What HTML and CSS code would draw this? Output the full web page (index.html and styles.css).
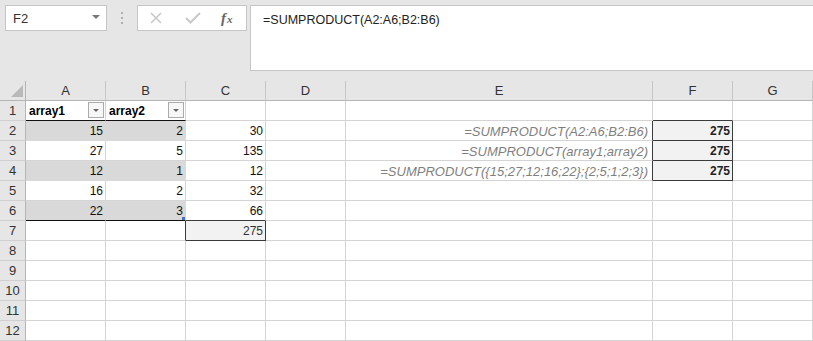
FILE: index.html
```html
<!DOCTYPE html>
<html>
<head>
<meta charset="utf-8">
<title>SUMPRODUCT</title>
<link rel="stylesheet" href="styles.css">
</head>
<body>
<!--formula bar-->
<div id="bar">
  <div class="namebox"><span>F2</span><b class="arrow"></b></div>
  <div class="dots"><i></i><i></i><i></i></div>
  <div class="fxbox">
    <svg class="ico-x" width="12" height="12" viewBox="0 0 12 12"><path d="M1 1L11 11M11 1L1 11" stroke="#c8c8c8" stroke-width="1.6" fill="none"/></svg>
    <svg class="ico-ok" width="16" height="12" viewBox="0 0 16 12"><path d="M1 6L5.5 10.5L15 1" stroke="#c8c8c8" stroke-width="2" fill="none"/></svg>
    <span class="fx">f<sub>x</sub></span>
  </div>
  <div class="formula">=SUMPRODUCT(A2:A6;B2:B6)</div>
</div>

<!--sheet-->
<div id="sheet">
  <div class="row head">
    <div class="corner"><b></b></div>
    <div class="ch">A</div><div class="ch">B</div><div class="ch">C</div><div class="ch">D</div>
    <div class="ch">E</div><div class="ch">F</div><div class="ch">G</div>
  </div>
  <div class="row">
    <div class="rh">1</div>
    <div class="c th bk"><span>array1</span><b class="dd"></b></div>
    <div class="c th bk"><span>array2</span><b class="dd"></b></div>
    <div class="c"></div><div class="c"></div><div class="c"></div>
    <div class="c bb"></div><div class="c"></div>
  </div>
  <div class="row">
    <div class="rh">2</div>
    <div class="c n band">15</div><div class="c n band">2</div>
    <div class="c n">30</div><div class="c"></div>
    <div class="c n it rb">=SUMPRODUCT(A2:A6;B2:B6)</div>
    <div class="c n tot bold rb bb">275</div><div class="c"></div>
  </div>
  <div class="row">
    <div class="rh">3</div>
    <div class="c n">27</div><div class="c n">5</div>
    <div class="c n">135</div><div class="c"></div>
    <div class="c n it rb">=SUMPRODUCT(array1;array2)</div>
    <div class="c n tot bold rb bb">275</div><div class="c"></div>
  </div>
  <div class="row">
    <div class="rh">4</div>
    <div class="c n band">12</div><div class="c n band">1</div>
    <div class="c n">12</div><div class="c"></div>
    <div class="c n it rb">=SUMPRODUCT({15;27;12;16;22};{2;5;1;2;3})</div>
    <div class="c n tot bold rb bb">275</div><div class="c"></div>
  </div>
  <div class="row">
    <div class="rh">5</div>
    <div class="c n">16</div><div class="c n">2</div>
    <div class="c n">32</div><div class="c"></div><div class="c"></div>
    <div class="c"></div><div class="c"></div>
  </div>
  <div class="row">
    <div class="rh">6</div>
    <div class="c n band bk">22</div><div class="c n band bk handle">3<b></b></div>
    <div class="c n bb">66</div><div class="c"></div><div class="c"></div>
    <div class="c"></div><div class="c"></div>
  </div>
  <div class="row">
    <div class="rh">7</div>
    <div class="c"></div><div class="c rb"></div>
    <div class="c n tot rb bb">275</div><div class="c"></div><div class="c"></div>
    <div class="c"></div><div class="c"></div>
  </div>
  <div class="row">
    <div class="rh">8</div>
    <div class="c"></div><div class="c"></div><div class="c"></div><div class="c"></div>
    <div class="c"></div><div class="c"></div><div class="c"></div>
  </div>
  <div class="row">
    <div class="rh">9</div>
    <div class="c"></div><div class="c"></div><div class="c"></div><div class="c"></div>
    <div class="c"></div><div class="c"></div><div class="c"></div>
  </div>
  <div class="row">
    <div class="rh">10</div>
    <div class="c"></div><div class="c"></div><div class="c"></div><div class="c"></div>
    <div class="c"></div><div class="c"></div><div class="c"></div>
  </div>
  <div class="row">
    <div class="rh">11</div>
    <div class="c"></div><div class="c"></div><div class="c"></div><div class="c"></div>
    <div class="c"></div><div class="c"></div><div class="c"></div>
  </div>
  <div class="row">
    <div class="rh">12</div>
    <div class="c"></div><div class="c"></div><div class="c"></div><div class="c"></div>
    <div class="c"></div><div class="c"></div><div class="c"></div>
  </div>
</div>
</body>
</html>
```

FILE: styles.css
```css
/*reset*/
*{box-sizing:border-box;}
body{margin:0; background:#e6e6e6; font-family:"Liberation Sans", Arial, sans-serif; color:#222; overflow:hidden;}

/*formula bar*/
#bar{display:flex; align-items:flex-start; height:81px; padding:5px 0 0 5px;}
.namebox{display:flex; justify-content:space-between; align-items:center; width:102px; height:26px; background:#fff; border:1px solid #c6c6c6; padding:0 6px 0 7px; font-size:13px; color:#333;}
.namebox .arrow{width:0; height:0; border-left:4px solid transparent; border-right:4px solid transparent; border-top:4px solid #777; margin-top:-2px;}
.dots{width:30px; display:flex; flex-direction:column; align-items:center; gap:3px; padding-top:7px;}
.dots i{display:block; width:2px; height:2px; background:#b0b0b0;}
.fxbox{display:flex; align-items:center; width:110px; height:26px; background:#fff; border:1px solid #c6c6c6;}
.ico-x{margin-left:12px;}
.ico-ok{margin-left:23px;}
.fx{margin-left:20px; font-family:"Liberation Serif", "Times New Roman", serif; font-style:italic; font-weight:bold; font-size:15px; color:#666;}
.fx sub{font-size:11px; vertical-align:0; margin-left:1px;}
.formula{flex:1; height:66px; margin-left:3px; background:#fff; border:1px solid #c6c6c6; border-right:none; padding:6px 12px; font-size:12.5px; line-height:16px; color:#222;}

/*sheet*/
.row{display:grid; grid-template-columns:26px 80px 80px 80px 80px 307px 80px 80px; grid-template-rows:20px; height:20px;}
.head .ch, .corner{background:#e6e6e6; border-right:1px solid #c6c6c6; border-bottom:1px solid #b5b5b5; text-align:center; font-size:13px; line-height:19px; color:#333;}
.corner{display:flex; justify-content:flex-end; align-items:flex-end; padding:0 2px 3px 0; border-right-color:#b5b5b5;}
.corner b{width:0; height:0; border-left:12px solid transparent; border-bottom:12px solid #b9b9b9;}
.rh{background:#e6e6e6; border-right:1px solid #b5b5b5; border-bottom:1px solid #d0d0d0; text-align:center; font-size:13px; line-height:18px; padding-top:1px; color:#333;}

.c{background:#fff; border-right:1px solid #d4d4d4; border-bottom:1px solid #d4d4d4; padding:2px 3px 0; font-size:12px; line-height:17px; white-space:nowrap; overflow:hidden; color:#111;}
.n{text-align:right; padding-right:2px;}
.band{background:#d9d9d9; border-right-color:#d9d9d9; border-bottom-color:#d9d9d9;}
.bk{border-bottom-color:#111;}
.th{display:flex; justify-content:space-between; align-items:flex-start; padding-right:1px; font-weight:bold; color:#000;}
.dd{display:flex; justify-content:center; align-items:center; width:16px; height:16px; margin-top:-1px; background:#f7f7f7; border:1px solid #ababab;}
.dd::after{content:""; border-left:3px solid transparent; border-right:3px solid transparent; border-top:3px solid #666;}
.it{font-style:italic; font-size:13px; color:#7f7f7f; padding-right:4px;}
.tot{background:#f2f2f2; color:#333;}
.bold{font-weight:bold; color:#222;}
.rb{border-right-color:#3b3b3b;}
.bb{border-bottom-color:#3b3b3b;}
.handle{position:relative;}
.handle b{position:absolute; right:0; bottom:0; width:3px; height:3px; background:#4a6fc2;}
```
